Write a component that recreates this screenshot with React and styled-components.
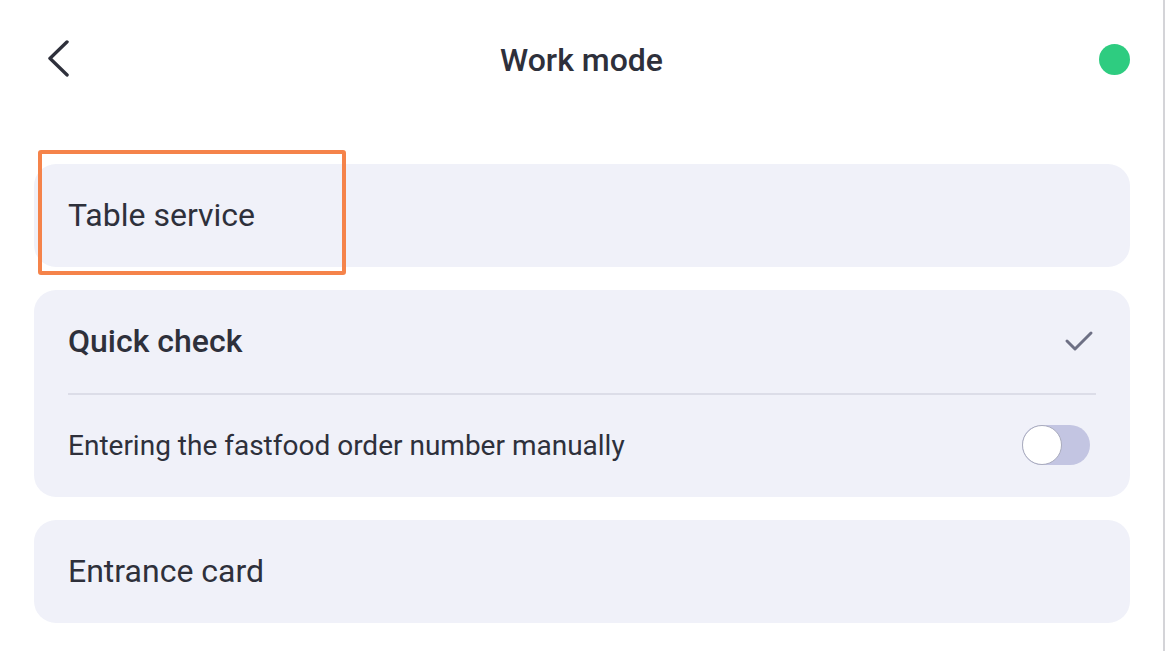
import * as React from 'react';
import styled, { createGlobalStyle } from 'styled-components';

const Global = createGlobalStyle`
  html, body {
    margin: 0;
    padding: 0;
    background: #ffffff;
  }
  body {
    font-family: Roboto, "Noto Sans", sans-serif;
    color: #2e303b;
  }
`;

const Page = styled.div`
  width: 1165px;
  height: 651px;
  box-sizing: border-box;
  position: relative;
  border-right: 2px solid #d4d4d8;
  overflow: hidden;
`;

const Header = styled.div`
  height: 119px;
  display: grid;
  grid-template-columns: 80px 1fr 80px;
  align-items: center;
  padding: 0 33px 0 45px;
  box-sizing: border-box;
`;

const BackButton = styled.div`
  display: flex;
  align-items: center;
  height: 40px;
`;

const Title = styled.div`
  text-align: center;
  font-size: 32px;
  font-weight: 500;
  color: #2e303b;
  padding-right: 12px;
`;

const StatusDot = styled.div`
  justify-self: end;
  width: 31px;
  height: 31px;
  border-radius: 50%;
  background: #2ecc80;
`;

const List = styled.div`
  display: flex;
  flex-direction: column;
  gap: 23px;
  padding: 45px 33px 0 34px;
`;

const Card = styled.div`
  background: #f0f1f9;
  border-radius: 22px;
  padding: 0 34px;
  display: flex;
  flex-direction: column;
`;

const Row = styled.div`
  height: ${(p) => p.h || 103}px;
  display: flex;
  align-items: center;
  justify-content: space-between;
  font-size: ${(p) => p.size || 32}px;
  font-weight: ${(p) => (p.bold ? 500 : 400)};
  color: #2e303b;
  padding-bottom: 2px;
  box-sizing: border-box;
`;

const Divider = styled.div`
  height: 2px;
  background: #dcdde8;
`;

const Toggle = styled.div`
  width: 68px;
  height: 40px;
  border-radius: 20px;
  background: #c3c5e2;
  position: relative;
  margin-right: 6px;
`;

const Thumb = styled.div`
  position: absolute;
  left: 0;
  top: 0;
  width: 40px;
  height: 40px;
  box-sizing: border-box;
  border-radius: 50%;
  background: #ffffff;
  border: 1.5px solid #a9abbd;
`;

const Highlight = styled.div`
  position: absolute;
  left: 38px;
  top: 150px;
  width: 308px;
  height: 125px;
  box-sizing: border-box;
  border: 4px solid #f5834a;
  border-radius: 3px;
  pointer-events: none;
`;

export default function App() {
  return (
    <>
      <Global />
      <Page>
        <Header>
          <BackButton>
            <svg width="40" height="40" viewBox="0 0 40 40">
              <path d="M28 2 L11 20 L28 38" fill="none" stroke="#2e303b" strokeWidth="3.5" strokeLinecap="round" strokeLinejoin="round" transform="translate(-6 0) scale(1 0.92)" />
            </svg>
          </BackButton>
          <Title>Work mode</Title>
          <StatusDot />
        </Header>
        <List>
          <Card>
            <Row>Table service</Row>
          </Card>
          <Card>
            <Row h={103} bold>
              Quick check
              <svg width="30" height="22" viewBox="0 0 30 22" style={{ marginRight: 2 }}>
                <path d="M3 11 L11 19 L27 3" fill="none" stroke="#6e7085" strokeWidth="3" strokeLinecap="round" strokeLinejoin="round" />
              </svg>
            </Row>
            <Divider />
            <Row h={102} size={28}>
              Entering the fastfood order number manually
              <Toggle>
                <Thumb />
              </Toggle>
            </Row>
          </Card>
          <Card>
            <Row>Entrance card</Row>
          </Card>
        </List>
        <Highlight />
      </Page>
    </>
  );
}
